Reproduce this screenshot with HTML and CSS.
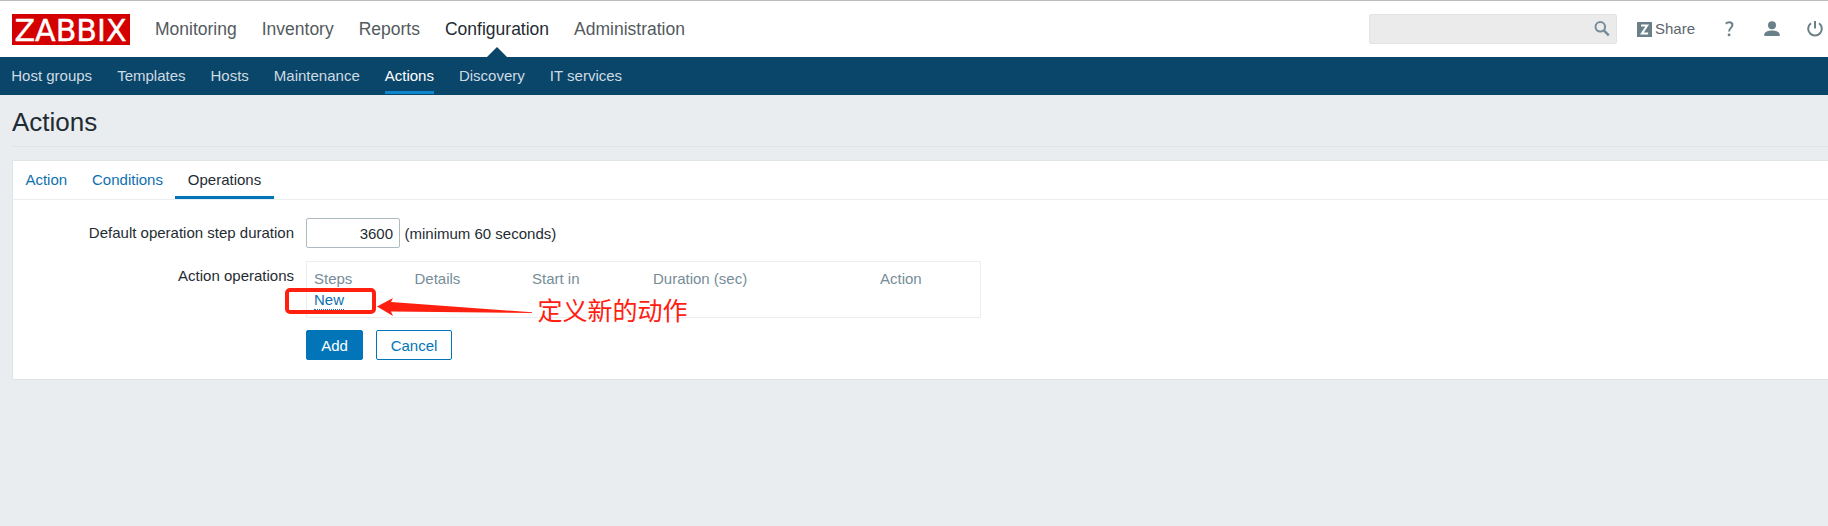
FILE: index.html
```
<!DOCTYPE html>
<html lang="en">
<head>
  <meta charset="utf-8">
  <title>Configuration of actions</title>
  <link rel="stylesheet" href="styles.css">
</head>
<body>
  <header class="header">
    <svg class="logo" width="118" height="31" viewBox="0 0 118 31">
      <rect width="118" height="31" fill="#d40000"/>
      <text x="2.5" y="26.7" textLength="112" lengthAdjust="spacingAndGlyphs" fill="#fff" stroke="#fff" stroke-width="0.4">ZABBIX</text>
    </svg>
    <nav class="top-nav">
      <a>Monitoring</a>
      <a>Inventory</a>
      <a>Reports</a>
      <a class="selected">Configuration</a>
      <a>Administration</a>
    </nav>
    <div class="search">
      <svg width="16" height="16" viewBox="0 0 16 16" fill="none" stroke="#768d99">
        <circle cx="6.3" cy="5.8" r="4.8" stroke-width="2"/>
        <path d="M9.8 9.3L14.8 14.3" stroke-width="2.6"/>
      </svg>
    </div>
    <div class="user-nav">
      <a class="share">
        <svg width="15" height="15" viewBox="0 0 15 15">
          <rect width="15" height="15" rx="0.5" fill="#6b7f89"/>
          <path d="M4 3.6H10.2L4.9 11.4H11.2" fill="none" stroke="#fff" stroke-width="2"/>
        </svg>
        Share
      </a>
      <svg class="help" width="9" height="16" viewBox="0 0 9 16">
        <path d="M0.7 2.6C1.7 1.8 2.7 1.3 4.2 1.3C6.3 1.3 7.4 2.4 7.4 4C7.4 6.8 4 7 4 10.6" fill="none" stroke="#6b7f89" stroke-width="2"/>
        <rect x="2.8" y="12.6" width="2.5" height="2.5" fill="#6b7f89"/>
      </svg>
      <svg class="profile" width="16" height="16" viewBox="0 0 16 16" fill="#6b7f89">
        <circle cx="8" cy="4.2" r="4"/>
        <path d="M0.3 15V13.6C0.3 10.8 4.5 9.6 8 9.6C11.5 9.6 15.7 10.8 15.7 13.6V15Z"/>
      </svg>
      <svg class="signout" width="16" height="16" viewBox="0 0 16 16" fill="none" stroke="#6b7f89" stroke-width="2">
        <path d="M8 0V7.5"/>
        <path d="M4 2.2A6.8 6.8 0 1 0 12 2.2"/>
      </svg>
    </div>
  </header>

  <nav class="sub-nav">
    <a>Host groups</a>
    <a>Templates</a>
    <a>Hosts</a>
    <a>Maintenance</a>
    <a class="selected">Actions</a>
    <a>Discovery</a>
    <a>IT services</a>
  </nav>

  <main class="article">
    <h1>Actions</h1>

    <div class="panel">
      <div class="tabs">
        <a>Action</a>
        <a>Conditions</a>
        <a class="selected">Operations</a>
      </div>

      <form class="form">
        <div class="row">
          <label for="esc_period">Default operation step duration</label>
          <input type="text" id="esc_period" value="3600">
          <span class="hint">(minimum 60 seconds)</span>
        </div>

        <div class="row row-operations">
          <label>Action operations</label>
          <div class="operations">
            <div class="operations-head">
              <span>Steps</span>
              <span>Details</span>
              <span>Start in</span>
              <span>Duration (sec)</span>
              <span>Action</span>
            </div>
            <a class="link-new">New</a>

            <!-- note drawn over the table -->
            <div class="note-box"></div>
            <svg class="note-arrow" width="156" height="20" viewBox="0 0 156 20">
              <path d="M0 8.5L16 0L14 4L155 14.3V15L14 13.5L16 18Z" fill="#ff2010"/>
            </svg>
            <div class="note-text" lang="zh">定义新的动作</div>
          </div>
        </div>

        <div class="buttons">
          <button type="button" class="btn">Add</button>
          <button type="button" class="btn btn-alt">Cancel</button>
        </div>
      </form>
    </div>
  </main>
</body>
</html>
```

FILE: styles.css
```
* {
  box-sizing: border-box;
}
body {
  margin: 0;
  background: #e9edf0;
  color: #1f2c33;
  font-family: "Liberation Sans", Arial, sans-serif;
  font-size: 15px;
  line-height: 18px;
}

/* header */
.header {
  display: flex;
  align-items: flex-start;
  height: 57px;
  padding: 13px 5px 0 12px;
  background: #fff;
  border-top: 1px solid #bcbcbc;
}
.logo {
  display: block;
  overflow: visible;
  font-family: "DejaVu Sans", sans-serif;
  font-size: 30px;
}
.top-nav {
  display: flex;
  gap: 25px;
  height: 43px;
  margin-left: 25px;
  font-size: 17.5px;
  line-height: 30px;
  color: #535a5e;
}
.top-nav .selected {
  position: relative;
  color: #1f2c33;
}
.top-nav .selected:after {
  content: "";
  position: absolute;
  left: 50%;
  bottom: 0;
  margin-left: -10px;
  border: 10px solid transparent;
  border-top: 0;
  border-bottom-color: #0a466a;
}
.search {
  display: flex;
  align-items: center;
  justify-content: flex-end;
  width: 248px;
  height: 30px;
  margin-left: auto;
  padding-right: 6px;
  background: #ebebeb;
  border: 1px solid #dfe4e7;
  border-radius: 2px;
}
.user-nav {
  display: flex;
  align-items: center;
  height: 30px;
  margin-left: 20px;
  color: #5b666c;
}
.share {
  display: flex;
  align-items: center;
  gap: 3px;
}
.help {
  margin-left: 30px;
}
.profile {
  margin-left: 30px;
}
.signout {
  margin-left: 27px;
}

/* second level menu */
.sub-nav {
  display: flex;
  gap: 25px;
  height: 38px;
  padding: 0 11.25px;
  background: #0a466a;
  color: #cfdbe2;
  line-height: 38px;
}
.sub-nav a {
  height: 37px;
}
.sub-nav .selected {
  color: #fff;
  border-bottom: 3px solid #0f85cc;
}

/* page */
.article {
  padding-left: 12px;
}
h1 {
  height: 52px;
  margin: 0 0 13px;
  border-bottom: 1px solid #dfe4e7;
  font-size: 26px;
  font-weight: normal;
  line-height: 54px;
}
.panel {
  height: 220px;
  background: #fff;
  border: 1px solid #dfe4e7;
  border-right: 0;
}
.tabs {
  display: flex;
  height: 39px;
  border-bottom: 1px solid #ebeef0;
  line-height: 38px;
  color: #0f6fb0;
}
.tabs a {
  height: 38px;
  padding: 0 12.45px;
}
.tabs .selected {
  color: #1f2c33;
  border-bottom: 3px solid #0275b8;
}

/* form */
.form {
  padding-top: 18px;
}
.row {
  display: flex;
}
.row label {
  width: 281px;
  margin-right: 12px;
  text-align: right;
  line-height: 30px;
}
.row input {
  width: 94px;
  height: 30px;
  padding: 1px 6px 0;
  border: 1px solid #acbbc2;
  border-radius: 2px;
  color: #1f2c33;
  font: inherit;
  text-align: right;
}
.hint {
  height: 30px;
  margin-left: 4.5px;
  line-height: 32px;
}
.row-operations {
  margin-top: 13px;
}
.operations {
  position: relative;
  width: 675px;
  height: 57px;
  padding: 8px 7px 0;
  border: 1px solid #ebeef0;
}
.operations-head {
  display: grid;
  grid-template-columns: 100.5px 117.5px 121px 227px auto;
  color: #768d99;
}
.link-new {
  display: inline-block;
  height: 19px;
  margin-top: 3px;
  border-bottom: 1px dotted #0f6fb0;
  color: #0f6fb0;
}

/* red note */
.note-box {
  position: absolute;
  left: -22px;
  top: 26px;
  width: 91px;
  height: 26px;
  border: 4px solid #ff2010;
  border-radius: 5px;
}
.note-arrow {
  position: absolute;
  left: 70px;
  top: 36px;
}
.note-text {
  position: absolute;
  left: 230.5px;
  top: 32px;
  color: #ff2010;
  font-family: "Noto Sans CJK SC", sans-serif;
  font-size: 25px;
  line-height: 30px;
  white-space: nowrap;
}

.buttons {
  display: flex;
  gap: 13px;
  margin: 12px 0 0 293px;
}
.btn {
  width: 57px;
  height: 30px;
  padding: 1px 0 0;
  background: #0275b8;
  border: 1px solid #0275b8;
  border-radius: 2px;
  color: #fff;
  font: inherit;
}
.btn-alt {
  width: 76px;
  background: #fff;
  color: #0275b8;
}
```
